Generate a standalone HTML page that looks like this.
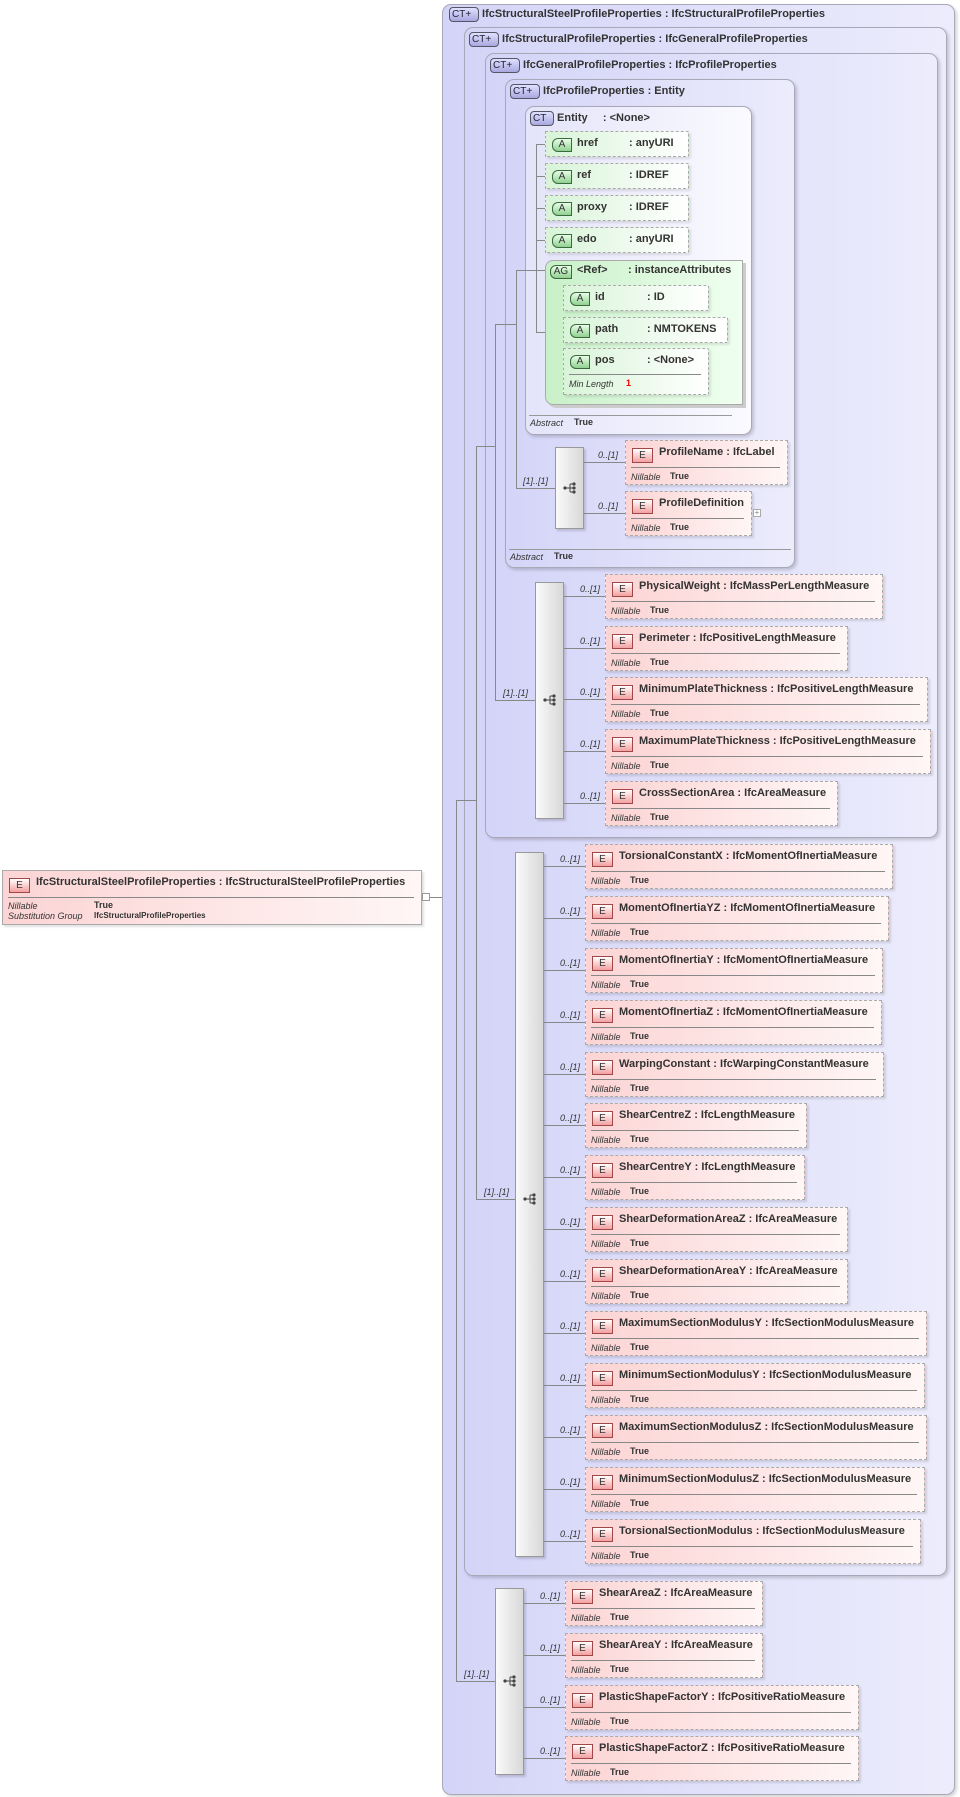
<!DOCTYPE html>
<html><head><meta charset="utf-8"><style>
body{margin:0;width:960px;height:1797px;background:#fff;position:relative;overflow:hidden;font-family:"Liberation Sans",Arial,sans-serif;color:#333}
div,span,i,b{position:absolute;box-sizing:border-box}
.ct{border:1px solid #a8a8b8;border-radius:9px;background:linear-gradient(to right,#d4d4f8,#ececfc);box-shadow:2px 2px 3px rgba(0,0,0,.18)}
.ctt{font-size:11px;font-weight:bold;white-space:nowrap;color:#333}
.bd{height:15px;border:1px solid #556;border-radius:4px;background:linear-gradient(#e0e0ff,#a8a8e0);font-size:10px;font-weight:normal;line-height:13px;padding-left:2px;color:#223;font-style:normal}
.el{height:45px;border:1px dashed #aaa;background:linear-gradient(to right,#fcd4d4,#fff6f6);box-shadow:2px 2px 2px rgba(0,0,0,.12)}
.E{left:6px;top:7px;width:21px;height:15px;border:1px solid #a04848;background:linear-gradient(#fff,#f4a0a0);font-size:10px;line-height:13px;text-align:center;font-style:normal;color:#333}
.el b{left:33px;top:5px;font-size:11px;white-space:nowrap}
.sep{left:5px;right:7px;top:26px;border-top:1px solid #888}
.n{left:5px;top:31px;font-size:9px;font-style:italic}
.t{left:44px;top:30px;font-size:9px;font-weight:bold}
.sq{border:1px solid #999;background:linear-gradient(to right,#fafafa,#d8d8d8);box-shadow:2px 2px 2px rgba(0,0,0,.15)}
.h{height:1px;background:#888}
.v{width:1px;background:#888}
.o{font-size:9px;font-style:italic;white-space:nowrap}
.at{height:26px;border:1px dashed #aaa;background:linear-gradient(to right,#d8f4d8,#fff);border-radius:0 2px 2px 0;box-shadow:2px 2px 2px rgba(0,0,0,.1)}
.A{left:6px;top:6px;width:20px;height:14px;border:1px solid #3a6a3a;border-radius:6px 0 0 6px;background:linear-gradient(#e8ffe8,#90d090);font-size:10px;line-height:12px;text-align:center;font-style:normal}
.at b{left:31px;top:5px;font-size:11px;white-space:nowrap}
.at b.ty{left:83px}
.ic{width:14px;height:12px}
</style></head><body>

<!-- main element -->
<div class="el" style="left:2px;top:870px;width:420px;height:55px;border:1px solid #aaa"><i class="E">E</i><b>IfcStructuralSteelProfileProperties : IfcStructuralSteelProfileProperties</b><div class="sep"></div><span class="n" style="top:30px">Nillable</span><span class="t" style="left:91px;top:29px">True</span><span class="n" style="top:40px">Substitution Group</span><span class="t" style="left:91px;top:40px;font-size:8px">IfcStructuralProfileProperties</span></div>
<div style="left:422px;top:893px;width:8px;height:8px;border:1px solid #999;background:#fff"></div>
<div class="h" style="left:430px;top:897px;width:26px"></div>

<!-- CT boxes -->
<div class="ct" style="left:442px;top:4px;width:513px;height:1791px"></div>
<div class="ctt" style="left:449px;top:7px"><i class="bd" style="position:relative;display:inline-block;width:30px;left:0">CT+</i> IfcStructuralSteelProfileProperties : IfcStructuralProfileProperties</div>
<div class="ct" style="left:464px;top:27px;width:483px;height:1549px"></div>
<div class="ctt" style="left:469px;top:32px"><i class="bd" style="position:relative;display:inline-block;width:30px;left:0">CT+</i> IfcStructuralProfileProperties : IfcGeneralProfileProperties</div>
<div class="ct" style="left:485px;top:53px;width:453px;height:785px"></div>
<div class="ctt" style="left:490px;top:58px"><i class="bd" style="position:relative;display:inline-block;width:30px;left:0">CT+</i> IfcGeneralProfileProperties : IfcProfileProperties</div>
<div class="ct" style="left:505px;top:79px;width:290px;height:489px"></div>
<div class="ctt" style="left:510px;top:84px"><i class="bd" style="position:relative;display:inline-block;width:30px;left:0">CT+</i> IfcProfileProperties : Entity</div>
<div class="h" style="left:509px;top:549px;width:282px;background:#999"></div>
<span class="n" style="left:510px;top:552px">Abstract</span><span class="t" style="left:554px;top:551px">True</span>
<div class="ct" style="left:525px;top:106px;width:227px;height:329px;background:linear-gradient(to right,#e4e4fa,#fafaff)"></div>
<div class="ctt" style="left:530px;top:111px"><i class="bd" style="position:relative;display:inline-block;width:24px;left:0">CT</i> Entity &nbsp;&nbsp;&nbsp;&nbsp;: &lt;None&gt;</div>
<div class="h" style="left:529px;top:415px;width:203px;background:#999"></div>
<span class="n" style="left:530px;top:418px">Abstract</span><span class="t" style="left:574px;top:417px">True</span>

<!-- connector lines -->
<div class="v" style="left:456px;top:800px;height:881px"></div>
<div class="h" style="left:456px;top:800px;width:20px"></div>
<div class="h" style="left:456px;top:1681px;width:39px"></div>
<div class="v" style="left:476px;top:446px;height:753px"></div>
<div class="h" style="left:476px;top:446px;width:19px"></div>
<div class="h" style="left:476px;top:1199px;width:39px"></div>
<div class="v" style="left:495px;top:324px;height:376px"></div>
<div class="h" style="left:495px;top:324px;width:21px"></div>
<div class="h" style="left:495px;top:700px;width:40px"></div>
<div class="v" style="left:516px;top:270px;height:218px"></div>
<div class="h" style="left:516px;top:270px;width:20px"></div>
<div class="h" style="left:516px;top:488px;width:39px"></div>
<div class="v" style="left:536px;top:144px;height:188px"></div>
<div class="h" style="left:536px;top:144px;width:12px"></div>
<div class="h" style="left:536px;top:176px;width:12px"></div>
<div class="h" style="left:536px;top:208px;width:12px"></div>
<div class="h" style="left:536px;top:240px;width:12px"></div>
<div class="h" style="left:536px;top:270px;width:12px"></div>
<div class="h" style="left:536px;top:332px;width:30px"></div>
<div class="v" style="left:555px;top:298px;height:64px"></div>
<div class="h" style="left:555px;top:298px;width:11px"></div>
<div class="h" style="left:555px;top:362px;width:11px"></div>

<span class="o" style="left:523px;top:476px">[1]..[1]</span>
<span class="o" style="left:503px;top:688px">[1]..[1]</span>
<span class="o" style="left:484px;top:1187px">[1]..[1]</span>
<span class="o" style="left:464px;top:1669px">[1]..[1]</span>

<!-- attributes -->
<div class="at" style="left:545px;top:131px;width:144px"><i class="A">A</i><b>href</b><b class="ty">: anyURI</b></div>
<div class="at" style="left:545px;top:163px;width:144px"><i class="A">A</i><b>ref</b><b class="ty">: IDREF</b></div>
<div class="at" style="left:545px;top:195px;width:144px"><i class="A">A</i><b>proxy</b><b class="ty">: IDREF</b></div>
<div class="at" style="left:545px;top:227px;width:144px"><i class="A">A</i><b>edo</b><b class="ty">: anyURI</b></div>
<div style="left:545px;top:260px;width:198px;height:145px;border:1px solid #aaa;background:linear-gradient(to right,#c8f0c8,#f0fff0);box-shadow:3px 3px 0 #ccc;border-radius:8px 0 0 8px"></div>
<i class="A" style="left:550px;top:265px;width:22px">AG</i>
<b style="left:577px;top:264px;font-size:11px">&lt;Ref&gt;</b><b style="left:628px;top:264px;font-size:11px">: instanceAttributes</b>
<div class="at" style="left:563px;top:285px;width:146px"><i class="A">A</i><b>id</b><b class="ty">: ID</b></div>
<div class="at" style="left:563px;top:317px;width:165px"><i class="A">A</i><b>path</b><b class="ty">: NMTOKENS</b></div>
<div class="at" style="left:563px;top:348px;width:146px;height:47px"><i class="A">A</i><b>pos</b><b class="ty">: &lt;None&gt;</b><div class="sep" style="top:25px"></div><span class="n" style="top:30px">Min Length</span><span style="left:62px;top:29px;font-size:9px;color:#e00;font-weight:bold">1</span></div>

<!-- seq 1 -->
<div class="sq" style="left:555px;top:447px;width:29px;height:82px"></div>
<svg class="ic" style="position:absolute;left:563px;top:482px" width="14" height="12"><circle cx="2" cy="6" r="1.6" fill="#444"/><path d="M2 6H7M7 2V10M7 2H11M7 6H11M7 10H11" stroke="#444" fill="none"/><circle cx="11" cy="2" r="1.6" fill="#444"/><circle cx="11" cy="6" r="1.6" fill="#444"/><circle cx="11" cy="10" r="1.6" fill="#444"/></svg>
<div class="h" style="left:584px;top:462px;width:41px"></div><span class="o" style="left:598px;top:450px">0..[1]</span>
<div class="h" style="left:584px;top:513px;width:41px"></div><span class="o" style="left:598px;top:501px">0..[1]</span>
<div class="el" style="left:625px;top:440px;width:163px"><i class="E">E</i><b>ProfileName : IfcLabel</b><div class="sep"></div><span class="n">Nillable</span><span class="t">True</span></div>
<div class="el" style="left:625px;top:491px;width:127px"><i class="E">E</i><b>ProfileDefinition</b><div class="sep"></div><span class="n">Nillable</span><span class="t">True</span></div>
<div style="left:753px;top:509px;width:8px;height:8px;border:1px solid #aaa;background:#fff;font-size:8px;line-height:6px;text-align:center;color:#888">+</div>

<!-- seq A -->
<div class="sq" style="left:535px;top:582px;width:29px;height:237px"></div>
<svg class="ic" style="position:absolute;left:543px;top:694px" width="14" height="12"><circle cx="2" cy="6" r="1.6" fill="#444"/><path d="M2 6H7M7 2V10M7 2H11M7 6H11M7 10H11" stroke="#444" fill="none"/><circle cx="11" cy="2" r="1.6" fill="#444"/><circle cx="11" cy="6" r="1.6" fill="#444"/><circle cx="11" cy="10" r="1.6" fill="#444"/></svg>
<div class="h" style="left:564px;top:596px;width:41px"></div><span class="o" style="left:580px;top:584px">0..[1]</span>
<div class="h" style="left:564px;top:648px;width:41px"></div><span class="o" style="left:580px;top:636px">0..[1]</span>
<div class="h" style="left:564px;top:699px;width:41px"></div><span class="o" style="left:580px;top:687px">0..[1]</span>
<div class="h" style="left:564px;top:751px;width:41px"></div><span class="o" style="left:580px;top:739px">0..[1]</span>
<div class="h" style="left:564px;top:803px;width:41px"></div><span class="o" style="left:580px;top:791px">0..[1]</span>
<div class="el" style="left:605px;top:574px;width:278px"><i class="E">E</i><b>PhysicalWeight : IfcMassPerLengthMeasure</b><div class="sep"></div><span class="n">Nillable</span><span class="t">True</span></div>
<div class="el" style="left:605px;top:626px;width:243px"><i class="E">E</i><b>Perimeter : IfcPositiveLengthMeasure</b><div class="sep"></div><span class="n">Nillable</span><span class="t">True</span></div>
<div class="el" style="left:605px;top:677px;width:323px"><i class="E">E</i><b>MinimumPlateThickness : IfcPositiveLengthMeasure</b><div class="sep"></div><span class="n">Nillable</span><span class="t">True</span></div>
<div class="el" style="left:605px;top:729px;width:326px"><i class="E">E</i><b>MaximumPlateThickness : IfcPositiveLengthMeasure</b><div class="sep"></div><span class="n">Nillable</span><span class="t">True</span></div>
<div class="el" style="left:605px;top:781px;width:233px"><i class="E">E</i><b>CrossSectionArea : IfcAreaMeasure</b><div class="sep"></div><span class="n">Nillable</span><span class="t">True</span></div>

<!-- seq B -->
<div class="sq" style="left:515px;top:852px;width:29px;height:705px"></div>
<svg class="ic" style="position:absolute;left:523px;top:1193px" width="14" height="12"><circle cx="2" cy="6" r="1.6" fill="#444"/><path d="M2 6H7M7 2V10M7 2H11M7 6H11M7 10H11" stroke="#444" fill="none"/><circle cx="11" cy="2" r="1.6" fill="#444"/><circle cx="11" cy="6" r="1.6" fill="#444"/><circle cx="11" cy="10" r="1.6" fill="#444"/></svg>
<div class="h" style="left:544px;top:866px;width:41px"></div><span class="o" style="left:560px;top:854px">0..[1]</span>
<div class="h" style="left:544px;top:918px;width:41px"></div><span class="o" style="left:560px;top:906px">0..[1]</span>
<div class="h" style="left:544px;top:970px;width:41px"></div><span class="o" style="left:560px;top:958px">0..[1]</span>
<div class="h" style="left:544px;top:1022px;width:41px"></div><span class="o" style="left:560px;top:1010px">0..[1]</span>
<div class="h" style="left:544px;top:1074px;width:41px"></div><span class="o" style="left:560px;top:1062px">0..[1]</span>
<div class="h" style="left:544px;top:1125px;width:41px"></div><span class="o" style="left:560px;top:1113px">0..[1]</span>
<div class="h" style="left:544px;top:1177px;width:41px"></div><span class="o" style="left:560px;top:1165px">0..[1]</span>
<div class="h" style="left:544px;top:1229px;width:41px"></div><span class="o" style="left:560px;top:1217px">0..[1]</span>
<div class="h" style="left:544px;top:1281px;width:41px"></div><span class="o" style="left:560px;top:1269px">0..[1]</span>
<div class="h" style="left:544px;top:1333px;width:41px"></div><span class="o" style="left:560px;top:1321px">0..[1]</span>
<div class="h" style="left:544px;top:1385px;width:41px"></div><span class="o" style="left:560px;top:1373px">0..[1]</span>
<div class="h" style="left:544px;top:1437px;width:41px"></div><span class="o" style="left:560px;top:1425px">0..[1]</span>
<div class="h" style="left:544px;top:1489px;width:41px"></div><span class="o" style="left:560px;top:1477px">0..[1]</span>
<div class="h" style="left:544px;top:1541px;width:41px"></div><span class="o" style="left:560px;top:1529px">0..[1]</span>
<div class="el" style="left:585px;top:844px;width:308px"><i class="E">E</i><b>TorsionalConstantX : IfcMomentOfInertiaMeasure</b><div class="sep"></div><span class="n">Nillable</span><span class="t">True</span></div>
<div class="el" style="left:585px;top:896px;width:304px"><i class="E">E</i><b>MomentOfInertiaYZ : IfcMomentOfInertiaMeasure</b><div class="sep"></div><span class="n">Nillable</span><span class="t">True</span></div>
<div class="el" style="left:585px;top:948px;width:298px"><i class="E">E</i><b>MomentOfInertiaY : IfcMomentOfInertiaMeasure</b><div class="sep"></div><span class="n">Nillable</span><span class="t">True</span></div>
<div class="el" style="left:585px;top:1000px;width:297px"><i class="E">E</i><b>MomentOfInertiaZ : IfcMomentOfInertiaMeasure</b><div class="sep"></div><span class="n">Nillable</span><span class="t">True</span></div>
<div class="el" style="left:585px;top:1052px;width:299px"><i class="E">E</i><b>WarpingConstant : IfcWarpingConstantMeasure</b><div class="sep"></div><span class="n">Nillable</span><span class="t">True</span></div>
<div class="el" style="left:585px;top:1103px;width:222px"><i class="E">E</i><b>ShearCentreZ : IfcLengthMeasure</b><div class="sep"></div><span class="n">Nillable</span><span class="t">True</span></div>
<div class="el" style="left:585px;top:1155px;width:220px"><i class="E">E</i><b>ShearCentreY : IfcLengthMeasure</b><div class="sep"></div><span class="n">Nillable</span><span class="t">True</span></div>
<div class="el" style="left:585px;top:1207px;width:263px"><i class="E">E</i><b>ShearDeformationAreaZ : IfcAreaMeasure</b><div class="sep"></div><span class="n">Nillable</span><span class="t">True</span></div>
<div class="el" style="left:585px;top:1259px;width:263px"><i class="E">E</i><b>ShearDeformationAreaY : IfcAreaMeasure</b><div class="sep"></div><span class="n">Nillable</span><span class="t">True</span></div>
<div class="el" style="left:585px;top:1311px;width:342px"><i class="E">E</i><b>MaximumSectionModulusY : IfcSectionModulusMeasure</b><div class="sep"></div><span class="n">Nillable</span><span class="t">True</span></div>
<div class="el" style="left:585px;top:1363px;width:340px"><i class="E">E</i><b>MinimumSectionModulusY : IfcSectionModulusMeasure</b><div class="sep"></div><span class="n">Nillable</span><span class="t">True</span></div>
<div class="el" style="left:585px;top:1415px;width:342px"><i class="E">E</i><b>MaximumSectionModulusZ : IfcSectionModulusMeasure</b><div class="sep"></div><span class="n">Nillable</span><span class="t">True</span></div>
<div class="el" style="left:585px;top:1467px;width:340px"><i class="E">E</i><b>MinimumSectionModulusZ : IfcSectionModulusMeasure</b><div class="sep"></div><span class="n">Nillable</span><span class="t">True</span></div>
<div class="el" style="left:585px;top:1519px;width:336px"><i class="E">E</i><b>TorsionalSectionModulus : IfcSectionModulusMeasure</b><div class="sep"></div><span class="n">Nillable</span><span class="t">True</span></div>

<!-- seq C -->
<div class="sq" style="left:495px;top:1588px;width:29px;height:187px"></div>
<svg class="ic" style="position:absolute;left:503px;top:1675px" width="14" height="12"><circle cx="2" cy="6" r="1.6" fill="#444"/><path d="M2 6H7M7 2V10M7 2H11M7 6H11M7 10H11" stroke="#444" fill="none"/><circle cx="11" cy="2" r="1.6" fill="#444"/><circle cx="11" cy="6" r="1.6" fill="#444"/><circle cx="11" cy="10" r="1.6" fill="#444"/></svg>
<div class="h" style="left:524px;top:1603px;width:41px"></div><span class="o" style="left:540px;top:1591px">0..[1]</span>
<div class="h" style="left:524px;top:1655px;width:41px"></div><span class="o" style="left:540px;top:1643px">0..[1]</span>
<div class="h" style="left:524px;top:1707px;width:41px"></div><span class="o" style="left:540px;top:1695px">0..[1]</span>
<div class="h" style="left:524px;top:1758px;width:41px"></div><span class="o" style="left:540px;top:1746px">0..[1]</span>
<div class="el" style="left:565px;top:1581px;width:198px"><i class="E">E</i><b>ShearAreaZ : IfcAreaMeasure</b><div class="sep"></div><span class="n">Nillable</span><span class="t">True</span></div>
<div class="el" style="left:565px;top:1633px;width:198px"><i class="E">E</i><b>ShearAreaY : IfcAreaMeasure</b><div class="sep"></div><span class="n">Nillable</span><span class="t">True</span></div>
<div class="el" style="left:565px;top:1685px;width:294px"><i class="E">E</i><b>PlasticShapeFactorY : IfcPositiveRatioMeasure</b><div class="sep"></div><span class="n">Nillable</span><span class="t">True</span></div>
<div class="el" style="left:565px;top:1736px;width:294px"><i class="E">E</i><b>PlasticShapeFactorZ : IfcPositiveRatioMeasure</b><div class="sep"></div><span class="n">Nillable</span><span class="t">True</span></div>

</body></html>
